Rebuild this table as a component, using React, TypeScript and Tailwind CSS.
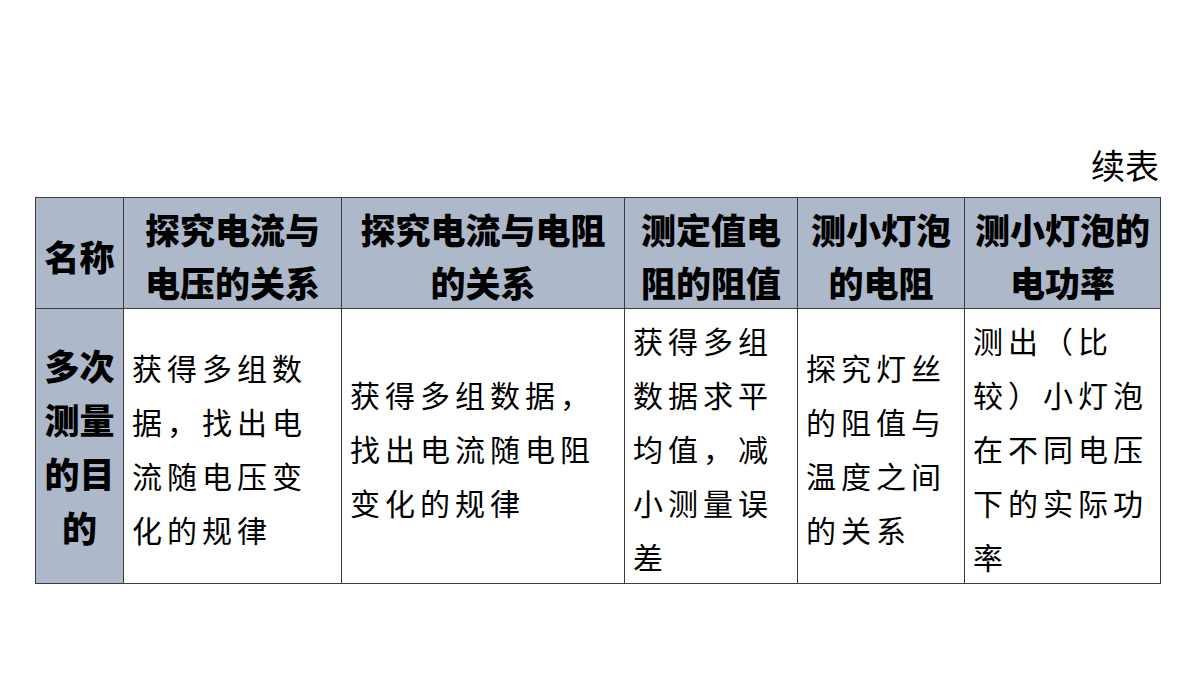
import React from "react";

const sans = { fontFamily: '"Noto Sans CJK SC", "Noto Sans", sans-serif' };

function Lines({ lines }: { lines: string[] }) {
  return (
    <>
      {lines.map((l, i) => (
        <div key={i}>{l}</div>
      ))}
    </>
  );
}

export default function App() {
  const headers: string[][] = [
    ["名称"],
    ["探究电流与", "电压的关系"],
    ["探究电流与电阻", "的关系"],
    ["测定值电", "阻的阻值"],
    ["测小灯泡", "的电阻"],
    ["测小灯泡的", "电功率"],
  ];
  const body: string[][] = [
    ["获得多组数", "据，找出电", "流随电压变", "化的规律"],
    ["获得多组数据，", "找出电流随电阻", "变化的规律"],
    ["获得多组", "数据求平", "均值，减", "小测量误", "差"],
    ["探究灯丝", "的阻值与", "温度之间", "的关系"],
    ["测出（比", "较）小灯泡", "在不同电压", "下的实际功", "率"],
  ];
  const widths = ["w-[88px]", "w-[218px]", "w-[283px]", "w-[173px]", "w-[167px]", "w-[196px]"];
  return (
    <div className="w-[1200px] h-[675px] bg-white text-black overflow-hidden" style={sans}>
      <div className="pt-[143px] pl-[35px] w-[1160px]">
        <div className="text-right text-[34px] leading-[44px] mb-[10px] pr-[1px]">续表</div>
        <table className="border-collapse table-fixed w-[1125px]">
          <colgroup>
            {widths.map((w, i) => (
              <col key={i} className={w} />
            ))}
          </colgroup>
          <tbody>
            <tr className="h-[110px]">
              {headers.map((h, i) => (
                <td
                  key={i}
                  className="border border-[#3c3c3c] bg-[#adb9ca] text-center align-middle font-black text-[35px] leading-[53px] pt-[4px] pb-0 px-0"
                >
                  <Lines lines={h} />
                </td>
              ))}
            </tr>
            <tr className="h-[275px]">
              <td className="border border-[#3c3c3c] bg-[#adb9ca] text-center align-middle font-black text-[35px] leading-[54px] p-0">
                <Lines lines={["多次", "测量", "的目", "的"]} />
              </td>
              {body.map((b, i) => (
                <td
                  key={i}
                  className="border border-[#3c3c3c] align-middle text-left text-[30px] leading-[54px] tracking-[5px] pl-[8px] pr-0 pt-[3px] pb-0"
                >
                  <Lines lines={b} />
                </td>
              ))}
            </tr>
          </tbody>
        </table>
      </div>
    </div>
  );
}
